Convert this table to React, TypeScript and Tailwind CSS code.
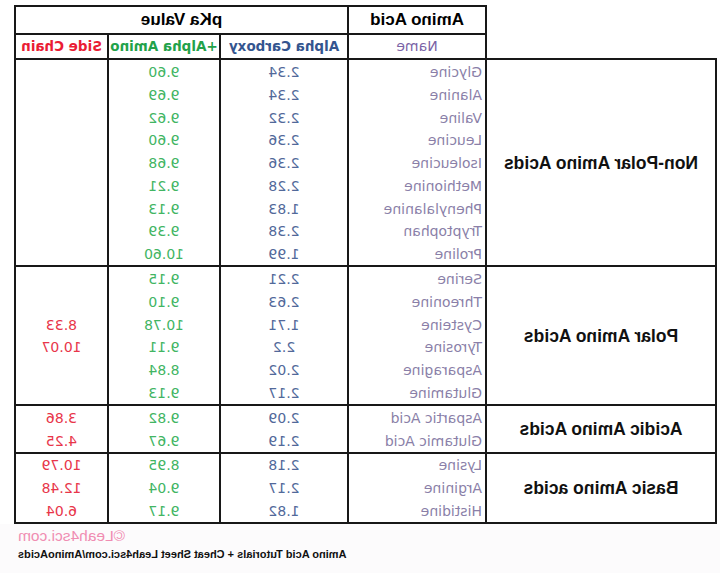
type Row = { name: string; carboxy: string; amino: string; side?: string }
type Group = { label: string; rows: Row[] }

const groups: Group[] = [
  {
    label: "Non-Polar Amino Acids",
    rows: [
      { name: "Glycine", carboxy: "2.34", amino: "9.60" },
      { name: "Alanine", carboxy: "2.34", amino: "9.69" },
      { name: "Valine", carboxy: "2.32", amino: "9.62" },
      { name: "Leucine", carboxy: "2.36", amino: "9.60" },
      { name: "Isoleucine", carboxy: "2.36", amino: "9.68" },
      { name: "Methionine", carboxy: "2.28", amino: "9.21" },
      { name: "Phenylalanine", carboxy: "1.83", amino: "9.13" },
      { name: "Tryptophan", carboxy: "2.38", amino: "9.39" },
      { name: "Proline", carboxy: "1.99", amino: "10.60" },
    ],
  },
  {
    label: "Polar Amino Acids",
    rows: [
      { name: "Serine", carboxy: "2.21", amino: "9.15" },
      { name: "Threonine", carboxy: "2.63", amino: "9.10" },
      { name: "Cysteine", carboxy: "1.71", amino: "10.78", side: "8.33" },
      { name: "Tyrosine", carboxy: "2.2", amino: "9.11", side: "10.07" },
      { name: "Asparagine", carboxy: "2.02", amino: "8.84" },
      { name: "Glutamine", carboxy: "2.17", amino: "9.13" },
    ],
  },
  {
    label: "Acidic Amino Acids",
    rows: [
      { name: "Aspartic Acid", carboxy: "2.09", amino: "9.82", side: "3.86" },
      { name: "Glutamic Acid", carboxy: "2.19", amino: "9.67", side: "4.25" },
    ],
  },
  {
    label: "Basic Amino acids",
    rows: [
      { name: "Lysine", carboxy: "2.18", amino: "8.95", side: "10.79" },
      { name: "Arginine", carboxy: "2.17", amino: "9.04", side: "12.48" },
      { name: "Histidine", carboxy: "1.82", amino: "9.17", side: "6.04" },
    ],
  },
]

export default function App() {
  return (
    // the source picture is a mirror image, so the whole sheet is flipped
    <div className="h-[573px] w-[720px] -scale-x-100 overflow-hidden bg-[#fcfbfc] font-['DejaVu_Sans',sans-serif]">
      <div className="flex flex-col bg-white pl-[3px] pt-[5px]">
        <div className="ml-[230px] w-[473px] border-2 border-b-0 border-[#181818]">
          <div className="flex h-[28px] border-b-2 border-[#181818] font-['Liberation_Sans',sans-serif] text-[17px] font-bold text-black">
            <div className="flex w-[138px] items-center justify-center border-r-2 border-[#181818]">Amino Acid</div>
            <div className="flex flex-1 items-center justify-center">pKa Value</div>
          </div>
          <div className="flex h-[23px] text-[13.5px] font-bold">
            <div className="flex w-[138px] items-center justify-center border-r-2 border-[#181818] text-[14px] font-normal text-[#7a62a6]">
              Name
            </div>
            <div className="flex w-[128px] items-center justify-center border-r-2 border-[#181818] text-[#34558f]">
              Alpha Carboxy
            </div>
            <div className="flex w-[112px] items-center justify-center border-r-2 border-[#181818] text-[#22a24a]">
              +Alpha Amino
            </div>
            <div className="flex flex-1 items-center justify-center text-[#ea1c34]">Side Chain</div>
          </div>
        </div>

        <div className="w-[703px] border-2 border-[#181818]">
          {groups.map((g, i) => (
            <div key={g.label} className={i < groups.length - 1 ? "flex border-b-2 border-[#181818]" : "flex"}>
              <div className="flex w-[230px] items-center justify-center border-r-2 border-[#181818] pt-[1px] font-['Liberation_Sans',sans-serif] text-[17.5px] font-bold text-[#111]">
                {g.label}
              </div>
              <div className="w-[138px] border-r-2 border-[#181818] text-[14px] text-[#8a7fa8]">
                {g.rows.map((r) => (
                  <div key={r.name} className="flex h-[22.8px] items-center pl-[3px] pt-[2px]">
                    {r.name}
                  </div>
                ))}
              </div>
              <div className="w-[128px] border-r-2 border-[#181818] text-[14px] text-[#52699a]">
                {g.rows.map((r) => (
                  <div key={r.name} className="flex h-[22.8px] items-center justify-center pt-[2px]">
                    {r.carboxy}
                  </div>
                ))}
              </div>
              <div className="w-[112px] border-r-2 border-[#181818] text-[14px] text-[#42b563]">
                {g.rows.map((r) => (
                  <div key={r.name} className="flex h-[22.8px] items-center justify-center pt-[2px]">
                    {r.amino}
                  </div>
                ))}
              </div>
              <div className="flex-1 text-[14px] text-[#e8364a]">
                {g.rows.map((r) => (
                  <div key={r.name} className="flex h-[22.8px] items-center justify-center pt-[2px]">
                    {r.side ?? ""}
                  </div>
                ))}
              </div>
            </div>
          ))}
        </div>
      </div>

      <div className="mt-[2px] flex flex-col items-end pr-[18px] font-['Liberation_Sans',sans-serif]">
        <div className="text-[15.5px] leading-[20px] text-[#f08db2]">©Leah4sci.com</div>
        <div className="text-[11px] font-bold leading-[16px] text-[#111]">
          Amino Acid Tutorials + Cheat Sheet Leah4sci.com/AminoAcids
        </div>
      </div>
    </div>
  )
}
